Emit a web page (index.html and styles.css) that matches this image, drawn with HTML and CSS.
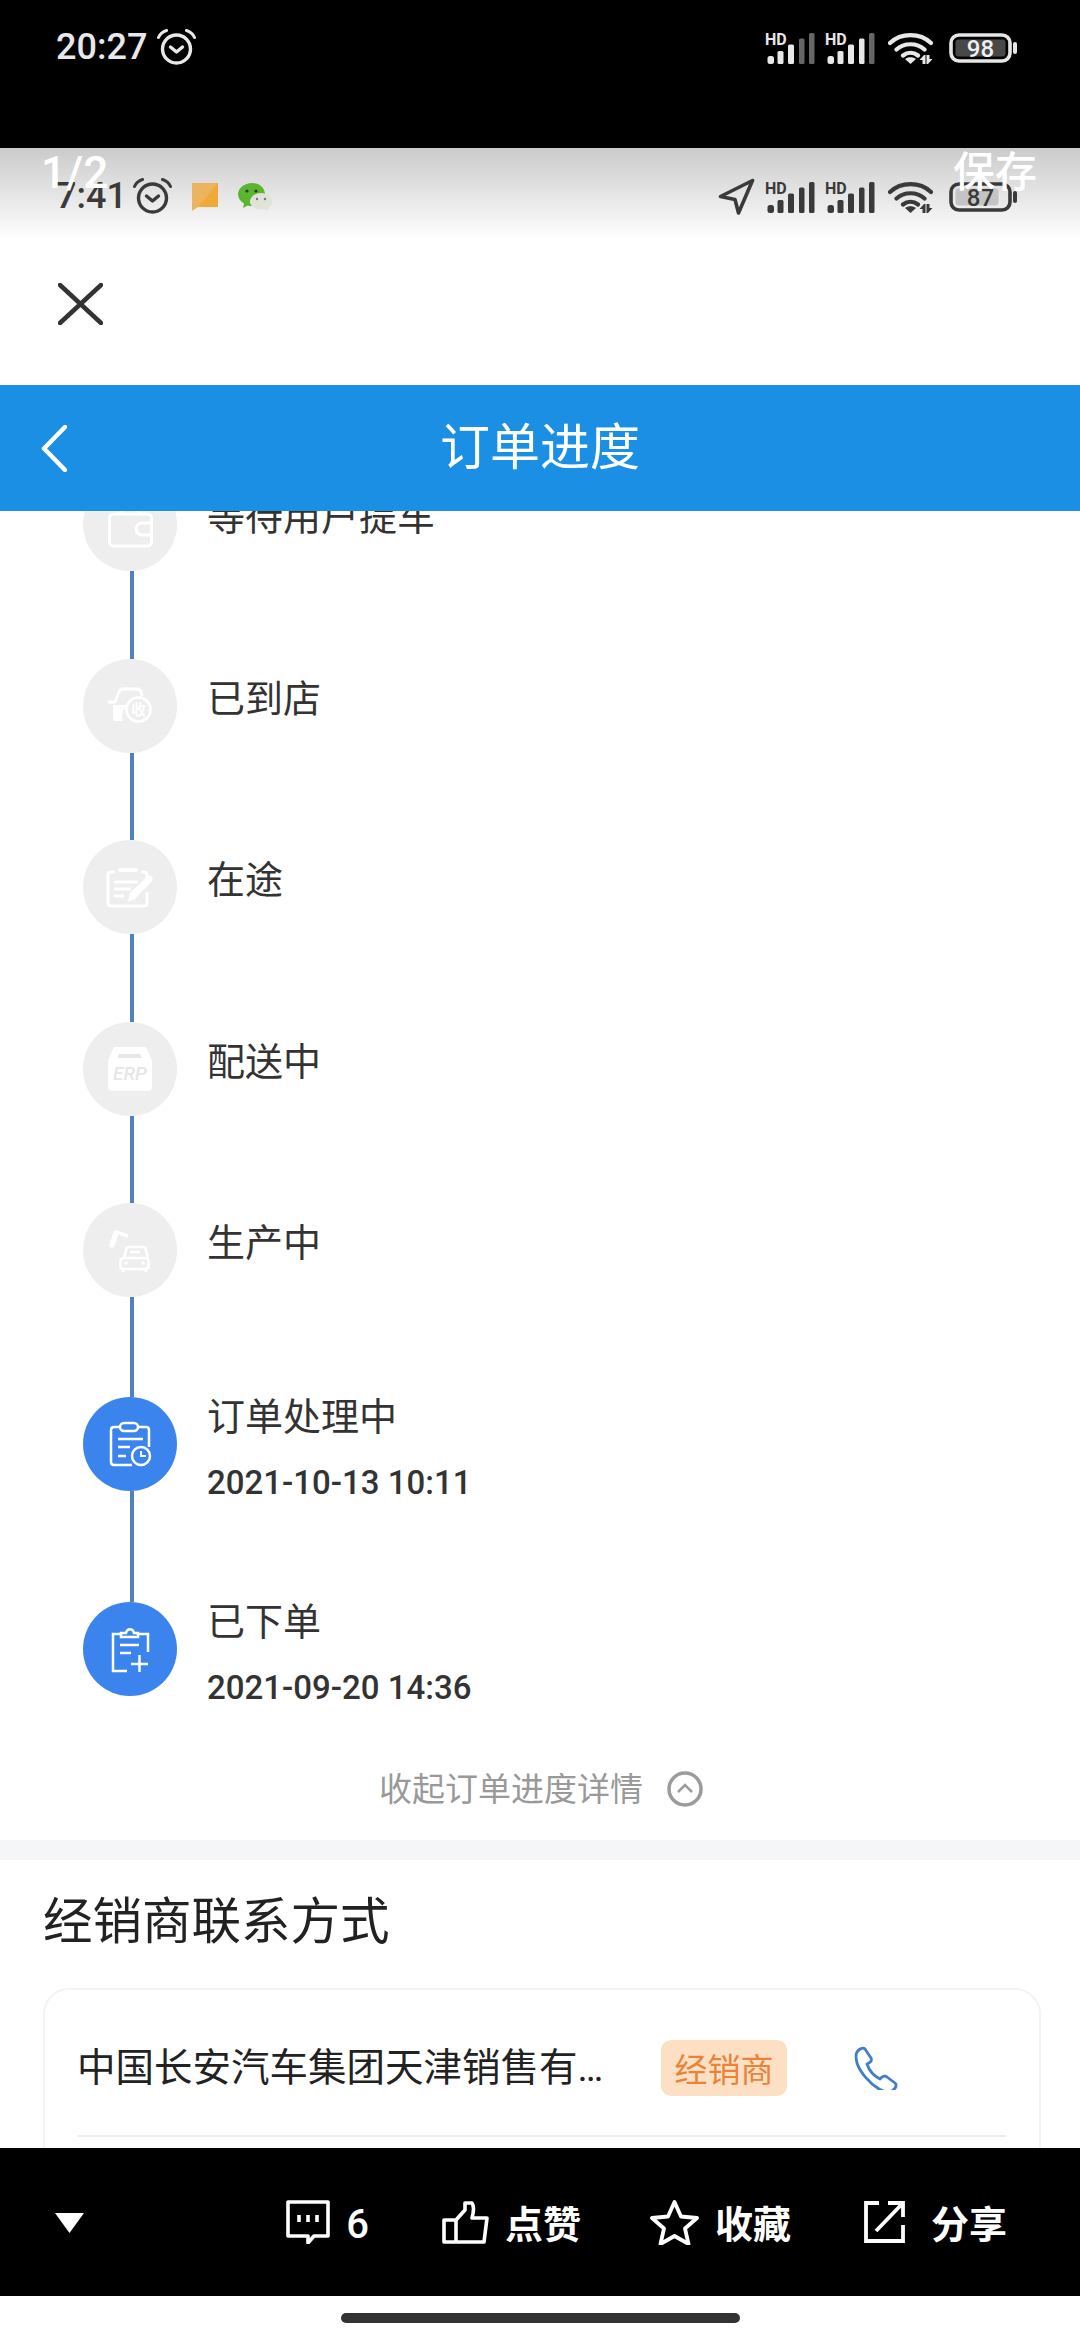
FILE: index.html
```html
<!DOCTYPE html>
<html lang="zh-CN">
<head>
    <meta charset="UTF-8">
    <meta name="viewport" content="width=device-width, initial-scale=1.0">
    <title>订单进度</title>
    <link rel="stylesheet" href="styles.css">
</head>
<body>

    <svg class="defs" width="0" height="0">
        <symbol id="alarm" viewBox="0 0 39 36">
            <circle cx="19.5" cy="20" r="14" fill="none" stroke="currentColor" stroke-width="3.4"/>
            <path d="M13.5 18l6 5 6-5" fill="none" stroke="currentColor" stroke-width="3.4" stroke-linecap="round" stroke-linejoin="round"/>
            <path d="M1.5 8.5C3 5 6 2.500 9.500 1.500M37.500 8.500C36 5 33 2.500 29.500 1.500" fill="none" stroke="currentColor" stroke-width="3" stroke-linecap="round"/>
        </symbol>
        <symbol id="signal" viewBox="0 0 50 32">
            <text x="0" y="13" class="hd">HD</text>
            <rect x="2.500" y="24" width="6.500" height="8" rx="2.500" fill="currentColor"/>
            <rect x="12.500" y="19" width="6" height="13" rx="1.500" fill="currentColor"/>
            <rect x="23" y="12.500" width="6" height="19.500" rx="1.500" fill="currentColor"/>
            <rect x="34" y="6.500" width="5.500" height="25.500" rx="1.500" fill="var(--bar4)"/>
            <rect x="44" y="1" width="5.500" height="31" rx="1.500" fill="var(--bar5)"/>
        </symbol>
        <symbol id="wifi" viewBox="0 0 45 33">
            <path d="M2 12C13 1.500 32 1.500 43 12M8.500 18.500C16 11.500 29 11.500 36.500 18.500M15 24.500C19.500 21 25.500 21 30 24.500" fill="none" stroke="currentColor" stroke-width="4.200" stroke-linecap="round"/>
            <path d="M22.500 33l-5.500-5c3-2.500 8-2.500 11 0z" fill="currentColor"/>
            <path d="M36 24l-4.500 5h3v4h3v-9zM40 33l4.500-5h-3v-4h-3v9z" fill="currentColor"/>
        </symbol>
    </svg>

    <!-- outer phone status bar -->
    <div class="statusbar outer">
        <div class="status-left">
            <span class="clock">20:27</span>
            <svg class="alarm"><use href="#alarm"/></svg>
        </div>
        <div class="status-right">
            <svg class="signal dim-two"><use href="#signal"/></svg>
            <svg class="signal dim-one"><use href="#signal"/></svg>
            <svg class="wifi"><use href="#wifi"/></svg>
            <svg class="battery" viewBox="0 0 68 30">
                <rect x="2" y="2" width="59" height="26" rx="8" fill="none" stroke="#e6e6e6" stroke-width="3.600"/>
                <rect x="6.500" y="6.500" width="50" height="17" rx="3" fill="#484848"/>
                <text x="31.500" y="23.500" class="batt-num light">98</text>
                <rect x="64" y="9" width="4" height="12" rx="2" fill="#e6e6e6"/>
            </svg>
        </div>
    </div>

    <div class="shot">
        <!-- status bar inside the captured page -->
        <div class="statusbar inner">
            <div class="status-left">
                <span class="clock">7:41</span>
                <svg class="alarm"><use href="#alarm"/></svg>
                <svg class="note" viewBox="0 0 26 28">
                    <path d="M0 0h26v24H6l-6 4z" fill="#edb45f"/>
                    <path d="M26 0v24H6z" fill="#f0a938"/>
                </svg>
                <svg class="wechat" viewBox="0 0 34 28">
                    <path d="M14 0c7.500 0 13 5 13 11.500S21.500 23 14 23c-1.500 0-3-.2-4.300-.6L5 25l1-4.500C2.400 18.300 0 15.200 0 11.500 0 5 6.500 0 14 0z" fill="#5cb531"/>
                    <circle cx="9" cy="8" r="1.600" fill="#23420f"/>
                    <circle cx="18" cy="8" r="1.600" fill="#23420f"/>
                    <path d="M23 10c6 0 11 3.800 11 8.500 0 2.600-1.500 5-4 6.500l.6 3-3.600-2c-1.300.3-2.600.5-4 .5-6 0-11-3.600-11-8s5-8.500 11-8.500z" fill="#dfe3d8"/>
                    <circle cx="19" cy="16" r="1.200" fill="#777"/>
                    <circle cx="27" cy="16" r="1.200" fill="#777"/>
                </svg>
            </div>
            <div class="status-right">
                <svg class="locate" viewBox="0 0 37 37">
                    <path d="M34.500 2.500L2.500 18.500l14.500 3 3.500 13.500z" fill="none" stroke="#3a3a3a" stroke-width="3.600" stroke-linejoin="round"/>
                </svg>
                <svg class="signal dim-none"><use href="#signal"/></svg>
                <svg class="signal dim-none"><use href="#signal"/></svg>
                <svg class="wifi"><use href="#wifi"/></svg>
                <svg class="battery" viewBox="0 0 68 30">
                    <rect x="2" y="2" width="59" height="26" rx="8" fill="none" stroke="#3a3a3a" stroke-width="3.600"/>
                    <rect x="6.500" y="6.500" width="43" height="17" rx="3" fill="#c4c4c4"/>
                    <text x="31.500" y="23.500" class="batt-num dark">87</text>
                    <rect x="64" y="9" width="4" height="12" rx="2" fill="#3a3a3a"/>
                </svg>
            </div>
            <span class="pager">1/2</span>
            <span class="save">保存</span>
        </div>

        <div class="close-row">
            <svg class="close" viewBox="0 0 45 42">
                <path d="M2 2l41 38M43 2L2 40" fill="none" stroke="#333" stroke-width="4.500" stroke-linecap="round"/>
            </svg>
        </div>

        <header class="navbar">
            <svg class="back" viewBox="0 0 26 47">
                <path d="M24 2L3 23.500 24 45" fill="none" stroke="#fff" stroke-width="4.500" stroke-linecap="round" stroke-linejoin="round"/>
            </svg>
            <h1>订单进度</h1>
        </header>

        <main class="content">
            <ul class="steps">
                <li class="step">
                    <div class="rail">
                        <div class="dot">
                            <svg viewBox="0 0 94 94">
                                <path d="M35 37l12-8 12 8" fill="none" stroke="#fff" stroke-width="2.500"/>
                                <rect x="26.500" y="37" width="42" height="32" rx="4" fill="none" stroke="#fff" stroke-width="3"/>
                                <path d="M68 46H59a6 6 0 0 0 0 12h9" fill="none" stroke="#fff" stroke-width="3"/>
                            </svg>
                        </div>
                        <div class="line"></div>
                    </div>
                    <div class="step-text"><p class="step-name">等待用户提车</p></div>
                </li>
                <li class="step">
                    <div class="rail">
                        <div class="dot">
                            <svg viewBox="0 0 94 94">
                                <path d="M26 43h6l4-10c.6-2 2-3 4-3h14c2 0 3.500 1 4 3l1 3" fill="none" stroke="#fff" stroke-width="3" stroke-linecap="round"/>
                                <path d="M30 46h14c-3 3-5 7-5 11 0 2 .3 3.500 1 5h-7c-2 0-3-1-3-3z" fill="#fff"/>
                                <circle cx="55.500" cy="50.500" r="12" fill="none" stroke="#fff" stroke-width="2.600"/>
                                <text x="55.500" y="56" class="dot-label">收</text>
                            </svg>
                        </div>
                        <div class="line"></div>
                    </div>
                    <div class="step-text"><p class="step-name">已到店</p></div>
                </li>
                <li class="step">
                    <div class="rail">
                        <div class="dot">
                            <svg viewBox="0 0 94 94">
                                <path d="M58 32h3c2 0 3 1 3 3v6M64 52v11c0 2-1 3-3 3H28c-2 0-3-1-3-3V35c0-2 1-3 3-3h4" fill="none" stroke="#fff" stroke-width="3"/>
                                <rect x="35" y="28" width="20" height="4" rx="2" fill="#fff"/>
                                <path d="M31 42h24M31 49h17M31 56h10" fill="none" stroke="#fff" stroke-width="3"/>
                                <path d="M45 62l2-9 17-16c2-2 4-2 5 0 1 1 1 3-1 5L52 59z" fill="#fff"/>
                            </svg>
                        </div>
                        <div class="line"></div>
                    </div>
                    <div class="step-text"><p class="step-name">在途</p></div>
                </li>
                <li class="step">
                    <div class="rail">
                        <div class="dot">
                            <svg viewBox="0 0 94 94">
                                <path d="M33 25h28c1.500 0 2.500.6 3 2l4 9c.6 1.300 1 2.600 1 4v25c0 2.500-1.500 4-4 4H29c-2.500 0-4-1.500-4-4V40c0-1.400.4-2.700 1-4l4-9c.5-1.400 1.500-2 3-2z" fill="#fff"/>
                                <path d="M36 32h21l1.500 4h-24z" fill="#e6e6e6"/>
                                <text x="47" y="58" class="dot-erp">ERP</text>
                            </svg>
                        </div>
                        <div class="line"></div>
                    </div>
                    <div class="step-text"><p class="step-name">配送中</p></div>
                </li>
                <li class="step tall">
                    <div class="rail">
                        <div class="dot">
                            <svg viewBox="0 0 94 94">
                                <path d="M29 42l4-12" fill="none" stroke="#fff" stroke-width="5.500" stroke-linecap="round"/>
                                <path d="M33 29l12 4" fill="none" stroke="#fff" stroke-width="3.500"/>
                                <path d="M41 55l2-8c.5-2 1.500-3 3-3h14c1.500 0 2.500 1 3 3l2 8" fill="none" stroke="#fff" stroke-width="2.600"/>
                                <rect x="37.500" y="55" width="28" height="11" rx="3" fill="none" stroke="#fff" stroke-width="2.600"/>
                                <path d="M47 49h10M40 66v3M63 66v3" fill="none" stroke="#fff" stroke-width="2.600"/>
                                <circle cx="43" cy="60" r="1.800" fill="#fff"/>
                                <circle cx="60" cy="60" r="1.800" fill="#fff"/>
                            </svg>
                        </div>
                        <div class="line"></div>
                    </div>
                    <div class="step-text"><p class="step-name">生产中</p></div>
                </li>
                <li class="step taller done">
                    <div class="rail">
                        <div class="dot">
                            <svg viewBox="0 0 94 94">
                                <path d="M37 30h-6c-2 0-3 1-3 3v32c0 2 1 3 3 3h18M55 30h8c2 0 3 1 3 3v17" fill="none" stroke="#fff" stroke-width="2.500"/>
                                <rect x="37" y="26" width="18" height="8" rx="4" fill="none" stroke="#fff" stroke-width="2.500"/>
                                <path d="M35 42h25M35 50h12M35 59h8" fill="none" stroke="#fff" stroke-width="2.500"/>
                                <circle cx="58" cy="59" r="9" fill="none" stroke="#fff" stroke-width="2.500"/>
                                <path d="M58 54v5h5" fill="none" stroke="#fff" stroke-width="2"/>
                            </svg>
                        </div>
                        <div class="line"></div>
                    </div>
                    <div class="step-text">
                        <p class="step-name">订单处理中</p>
                        <p class="step-time">2021-10-13 10:11</p>
                    </div>
                </li>
                <li class="step last done">
                    <div class="rail">
                        <div class="dot">
                            <svg viewBox="0 0 94 94">
                                <path d="M38 32h-8v37h14M55 32h10v18" fill="none" stroke="#fff" stroke-width="2.500"/>
                                <path d="M38 35v-4h5c1-5 7-5 8 0h4v4z" fill="none" stroke="#fff" stroke-width="2.500"/>
                                <path d="M37 43h19M37 51h11M48 62h17M56.500 53v17" fill="none" stroke="#fff" stroke-width="2.500"/>
                            </svg>
                        </div>
                    </div>
                    <div class="step-text">
                        <p class="step-name">已下单</p>
                        <p class="step-time">2021-09-20 14:36</p>
                    </div>
                </li>
            </ul>

            <div class="collapse">
                <span>收起订单进度详情</span>
                <svg viewBox="0 0 36 36">
                    <circle cx="18" cy="18" r="16" fill="none" stroke="#9b9b9b" stroke-width="3.500"/>
                    <path d="M11 21l7-7 7 7" fill="none" stroke="#9b9b9b" stroke-width="2.500"/>
                </svg>
            </div>

            <section class="dealer">
                <h2>经销商联系方式</h2>
                <div class="card">
                    <div class="dealer-row">
                        <span class="dealer-name">中国长安汽车集团天津销售有限公司</span>
                        <span class="badge">经销商</span>
                        <svg class="phone" viewBox="0 0 44 44">
                            <path d="M3 6c2-3 6-5 8-3l6 9c1 2 0 4-2 5l-2 1c2 6 7 12 13 15l2-2c2-1 4-1 5 0l8 6c2 2 1 5-2 7-4 3-9 2-14-1C15 37 6 26 3 17 2 12 1 9 3 6z" fill="none" stroke="#3f7fc8" stroke-width="2.800" stroke-linejoin="round"/>
                        </svg>
                    </div>
                </div>
            </section>
        </main>
    </div>

    <!-- overlay toolbar of the image viewer -->
    <footer class="toolbar">
        <svg class="caret" viewBox="0 0 29 20"><path d="M0 0h29L14.500 20z" fill="#fff"/></svg>
        <div class="actions">
            <div class="action">
                <svg class="act-comment" viewBox="0 0 44 44">
                    <path d="M2 2h40v34H28l-6 7v-7H2z" fill="none" stroke="#fff" stroke-width="3.600" stroke-linejoin="round"/>
                    <path d="M13 15v7M22 15v7M31 15v7" stroke="#fff" stroke-width="3.600"/>
                </svg>
                <span class="count">6</span>
            </div>
            <div class="action like">
                <svg class="act-like" viewBox="0 0 47 43">
                    <path d="M14 19v22H2V19zM14 19l9-10V2h7c2 3 2 8 0 15h15l-3 24H14" fill="none" stroke="#fff" stroke-width="3.600" stroke-linejoin="round"/>
                </svg>
                <span>点赞</span>
            </div>
            <div class="action">
                <svg class="act-star" viewBox="0 0 49 46">
                    <path d="M24.500 3l6.500 14.500 16 1.500-12 10.500 3.500 15.500-14-8-14 8 3.500-15.500L2 19l16-1.500z" fill="none" stroke="#fff" stroke-width="3.800" stroke-linejoin="round"/>
                </svg>
                <span>收藏</span>
            </div>
            <div class="action">
                <svg class="act-share" viewBox="0 0 41 42">
                    <path d="M15 2H2v38h37V24M12 30L38 3M24 2h15v14" fill="none" stroke="#fff" stroke-width="3.800"/>
                </svg>
                <span>分享</span>
            </div>
        </div>
    </footer>

    <div class="home-area"><div class="home-bar"></div></div>

</body>
</html>
```

FILE: styles.css
```css
* {
    box-sizing: border-box;
}
html, body {
    margin: 0;
    padding: 0;
}
body {
    width: 1080px;
    height: 2340px;
    overflow: hidden;
    display: flex;
    flex-direction: column;
    background-color: #fff;
    font-family: Roboto, "Noto Sans CJK SC", sans-serif;
    color: #333;
}
h1, h2, p, ul {
    margin: 0;
    padding: 0;
    font-weight: 400;
}
ul {
    list-style: none;
}
.defs {
    position: absolute;
}

/* status bars */
.statusbar {
    display: flex;
    justify-content: space-between;
    align-items: flex-start;
    padding-left: 56px;
    padding-right: 63px;
    flex-shrink: 0;
}
.statusbar.outer {
    height: 148px;
    padding-top: 29px;
    background-color: #000;
    color: #e8e8e8;
}
.statusbar.inner {
    position: relative;
    height: 92px;
    padding-top: 30px;
    background: linear-gradient(#cbcbcb, #fff);
    color: #3a3a3a;
}
.status-left, .status-right {
    display: flex;
    align-items: center;
    height: 37px;
}
.status-right {
    gap: 10px;
}
.clock {
    font-size: 36px;
    font-weight: 500;
    line-height: 37px;
}
.alarm {
    width: 39px;
    height: 36px;
    margin-left: 10px;
    margin-top: -2px;
}
.inner .alarm {
    margin-left: 6px;
}
.note {
    width: 26px;
    height: 28px;
    margin-left: 20px;
}
.wechat {
    width: 34px;
    height: 28px;
    margin-left: 20px;
}
.locate {
    width: 37px;
    height: 37px;
}
.signal {
    width: 50px;
    height: 32px;
}
.dim-two {
    --bar4: #666;
    --bar5: #666;
}
.dim-one {
    --bar4: #e8e8e8;
    --bar5: #666;
}
.dim-none {
    --bar4: #3a3a3a;
    --bar5: #3a3a3a;
}
.hd {
    font-size: 16px;
    font-weight: 700;
    fill: currentColor;
}
.wifi {
    width: 45px;
    height: 33px;
    margin: 0 6px 0 3px;
}
.battery {
    width: 68px;
    height: 30px;
}
.batt-num {
    font-size: 24px;
    font-weight: 500;
    text-anchor: middle;
}
.batt-num.light {
    fill: #f0f0f0;
}
.batt-num.dark {
    fill: #3a3a3a;
}
.pager, .save {
    position: absolute;
    top: 0;
    color: #fff;
    font-weight: 500;
}
.pager {
    left: 41px;
    font-size: 44px;
    line-height: 48px;
    top: 1px;
}
.save {
    right: 43px;
    font-size: 42px;
    line-height: 50px;
}

/* captured page */
.shot {
    flex: 1;
    min-height: 0;
    display: flex;
    flex-direction: column;
    overflow: hidden;
}
.close-row {
    height: 145px;
    flex-shrink: 0;
    padding: 43px 0 0 58px;
}
.close {
    display: block;
    width: 45px;
    height: 42px;
}
.navbar {
    position: relative;
    height: 126px;
    flex-shrink: 0;
    display: flex;
    align-items: center;
    justify-content: center;
    background-color: #1a8fe3;
}
.navbar h1 {
    font-size: 50px;
    color: #fff;
    line-height: 60px;
}
.back {
    position: absolute;
    left: 41px;
    top: 40px;
    width: 26px;
    height: 47px;
}
.content {
    flex: 1;
    min-height: 0;
    overflow: hidden;
}

/* timeline */
.steps {
    margin-top: -34px;
    padding-left: 83px;
}
.step {
    display: flex;
    height: 181.5px;
}
.step.tall {
    height: 194px;
}
.step.taller {
    height: 205px;
}
.step.last {
    height: 94px;
}
.rail {
    width: 94px;
    display: flex;
    flex-direction: column;
    align-items: center;
    flex-shrink: 0;
}
.dot {
    width: 94px;
    height: 94px;
    border-radius: 50%;
    background-color: #eee;
    flex-shrink: 0;
}
.dot svg {
    display: block;
    width: 94px;
    height: 94px;
}
.done .dot {
    background-color: #3b84ee;
}
.line {
    flex: 1;
    width: 4px;
    margin-left: 3px;
    background-color: #4f81bd;
}
.dot-label {
    font-size: 15px;
    font-weight: 700;
    fill: #fff;
    text-anchor: middle;
}
.dot-erp {
    font-size: 19px;
    font-weight: 500;
    font-style: italic;
    fill: #e6e6e6;
    text-anchor: middle;
}
.step-text {
    padding: 18px 0 0 30px;
}
.done .step-text {
    padding-top: 0;
    margin-top: -2px;
}
.step-name {
    font-size: 38px;
    line-height: 44px;
    color: #333;
}
.step-time {
    margin-top: 22px;
    font-size: 33px;
    font-weight: 500;
    line-height: 44px;
    color: #333;
}
.collapse {
    display: flex;
    align-items: center;
    justify-content: center;
    gap: 24px;
    height: 144px;
    padding-top: 38px;
    padding-left: 2px;
    font-size: 33px;
    color: #999;
}
.collapse svg {
    width: 36px;
    height: 36px;
    margin-top: 4px;
}

/* dealer contact */
.dealer {
    border-top: 20px solid #f4f6f8;
    padding: 32px 39px 0 43px;
}
.dealer h2 {
    font-size: 49.500px;
    line-height: 60px;
    color: #222;
}
.card {
    margin-top: 36px;
    border: 2px solid #f3f3f3;
    border-radius: 26px;
    padding: 0 33px 0 32px;
    height: 300px;
}
.dealer-row {
    display: flex;
    align-items: center;
    height: 147px;
    padding-top: 10px;
    border-bottom: 2px solid #eee;
}
.dealer-name {
    width: 528px;
    font-size: 38.500px;
    line-height: 48px;
    color: #222;
    white-space: nowrap;
    overflow: hidden;
    text-overflow: ellipsis;
}
.badge {
    margin-left: 56px;
    width: 126px;
    height: 56px;
    display: flex;
    align-items: center;
    justify-content: center;
    border-radius: 10px;
    background-color: #fde0c4;
    color: #e8833a;
    font-size: 33px;
}
.phone {
    margin-left: 67px;
    width: 44px;
    height: 44px;
}

/* viewer toolbar */
.toolbar {
    height: 148px;
    flex-shrink: 0;
    display: flex;
    align-items: center;
    justify-content: space-between;
    padding: 0 73px 0 55px;
    background-color: #000;
    color: #fff;
}
.caret {
    width: 29px;
    height: 20px;
    margin-top: 2px;
}
.actions {
    display: flex;
    align-items: center;
    gap: 73px;
}
.action {
    display: flex;
    align-items: center;
    gap: 16px;
    font-size: 38px;
    font-weight: 700;
    line-height: 44px;
}
.action span {
    padding-top: 5px;
}
.action.like {
    margin-right: -4px;
}
.count {
    font-weight: 500;
    font-size: 40px;
}
.act-comment {
    width: 44px;
    height: 44px;
}
.act-like {
    width: 47px;
    height: 43px;
}
.act-star {
    width: 49px;
    height: 46px;
}
.act-share {
    width: 41px;
    height: 42px;
    margin-right: 10px;
}
.home-area {
    height: 44px;
    flex-shrink: 0;
    display: flex;
    justify-content: center;
    padding-top: 17px;
}
.home-bar {
    width: 399px;
    height: 10px;
    border-radius: 5px;
    background-color: #333;
}
```
